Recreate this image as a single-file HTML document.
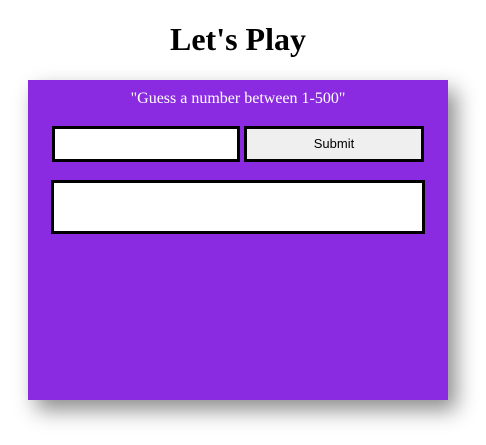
<!DOCTYPE html>
<html><head><style>
body{margin:0;width:486px;height:445px;background:#fff;position:relative;overflow:hidden;font-family:"Liberation Serif",serif;}
h1{position:absolute;top:0;left:0;width:476px;margin:0;top:21px;text-align:center;font-size:32px;font-weight:bold;line-height:37px;}
.box{position:absolute;left:28px;top:80px;width:420px;height:320px;background:#8a2be2;box-shadow:8px 10px 20px rgba(0,0,0,.45);}
.p{position:absolute;top:10px;left:0;width:420px;text-align:center;color:#fff;font-size:16px;line-height:18px;}
.in{position:absolute;left:24px;top:46px;width:182px;height:30px;border:3px solid #000;background:#fff;}
.btn{position:absolute;left:216px;top:46px;width:174px;height:30px;border:3px solid #000;background:#efefef;font:13px "Liberation Sans",sans-serif;text-align:center;line-height:30px;}
.out{position:absolute;left:23px;top:100px;width:368px;height:48px;border:3px solid #000;background:#fff;}
</style></head><body>
<h1>Let's Play</h1>
<div class="box">
<div class="p">"Guess a number between 1-500"</div>
<div class="in"></div>
<div class="btn">Submit</div>
<div class="out"></div>
</div>
</body></html>
